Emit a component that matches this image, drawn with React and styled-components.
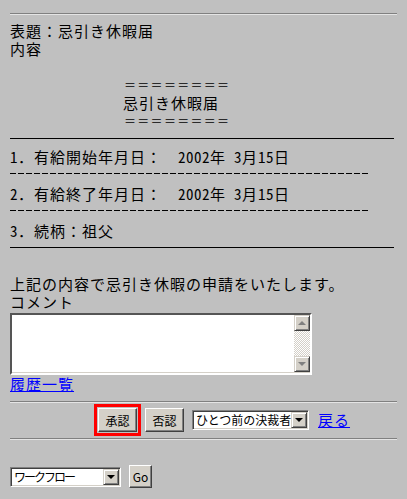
import React from 'react';
import styled, { createGlobalStyle } from 'styled-components';

const GlobalStyle = createGlobalStyle`
  body {
    margin: 0;
    background: #c0c0c0;
    font-family: "Noto Sans CJK JP", "Liberation Sans", sans-serif;
    font-size: 15px;
    letter-spacing: 1px;
    line-height: 18px;
    color: #000;
  }
`;

const Page = styled.div`
  padding: 13px 10px 0;
`;

const Groove = styled.div`
  height: 0;
  border-top: 1px solid #808080;
  border-bottom: 1px solid #e4e4e4;
  margin-top: ${(p) => p.$top || 0}px;
`;

const Solid = styled.div`
  width: 384px;
  height: 1px;
  background: #000;
  margin-top: ${(p) => p.$top || 0}px;
`;

const Dashes = styled.div`
  width: 358px;
  height: 1px;
  margin-top: ${(p) => p.$top || 0}px;
  background: repeating-linear-gradient(90deg, #000 0 6px, transparent 6px 8px);
`;

const Line = styled.div`
  height: 18px;
  white-space: pre;
  margin-top: ${(p) => p.$top || 0}px;
`;

const Indented = styled(Line)`
  padding-left: 113px;
`;

const Equals = styled.span`
  font-size: 12px;
  letter-spacing: 1.3px;
  padding-left: 1px;
  position: relative;
  top: -1px;
`;

const Half = styled.span`
  font-feature-settings: "hwid";
  letter-spacing: 0.5px;
`;

const Memo = styled.div`
  margin-top: 2px;
  width: 302px;
  height: 62px;
  box-sizing: border-box;
  display: flex;
  background: #fff;
  border-style: solid;
  border-width: 2px;
  border-color: #555 #fff #fff #555;
  box-shadow: inset -1px -1px 0 #d4d0c8;
`;

const MemoText = styled.div`
  flex: 1;
`;

const ScrollBar = styled.div`
  width: 16px;
  display: flex;
  flex-direction: column;
  margin-bottom: 1px;
`;

const ScrollTrack = styled.div`
  flex: 1;
  background: repeating-conic-gradient(#fff 0 25%, #d4d0c8 0 50%) 0 0 / 2px 2px;
`;

const ScrollButton = styled.div`
  height: 16px;
  box-sizing: border-box;
  background: #d4d0c8;
  border-style: solid;
  border-width: 1px;
  border-color: #d4d0c8 #404040 #404040 #d4d0c8;
  box-shadow: inset 1px 1px 0 #fff, inset -1px -1px 0 #808080;
  display: flex;
  align-items: center;
  justify-content: center;
`;

const Tri = styled.span`
  width: 0;
  height: 0;
  border-left: 4px solid transparent;
  border-right: 4px solid transparent;
  ${(p) =>
    p.$up
      ? `border-bottom: 4px solid ${p.$color};`
      : `border-top: 4px solid ${p.$color};`}
`;

const Link = styled.a`
  color: #0000ff;
  text-decoration: underline;
  cursor: pointer;
`;

const ActionRow = styled.div`
  margin-top: 5px;
  padding-left: 88px;
  display: flex;
  align-items: center;
  gap: 8px;
  height: 24px;
`;

const Button = styled.button`
  box-sizing: border-box;
  width: ${(p) => p.$w || 39}px;
  height: ${(p) => p.$h || 24}px;
  padding: 0;
  font-family: "Noto Sans CJK JP", "Liberation Sans", sans-serif;
  font-size: 12px;
  letter-spacing: 0;
  color: #000;
  background: #d4d0c8;
  border-style: solid;
  border-width: 1px;
  border-color: #fff #404040 #404040 #fff;
  box-shadow: inset -1px -1px 0 #808080;
  outline: ${(p) => (p.$focus ? '3px solid #ff0000' : 'none')};
  outline-offset: 1px;
`;

const Select = styled.div`
  box-sizing: border-box;
  width: ${(p) => p.$w}px;
  height: 20px;
  display: flex;
  background: #fff;
  border-style: solid;
  border-width: 1px;
  border-color: #808080 #fff #fff #808080;
  box-shadow: inset 1px 1px 0 #404040, inset -1px -1px 0 #d4d0c8;
  padding: 1px;
  font-size: 12px;
  line-height: 16px;
  letter-spacing: 0;
`;

const SelectText = styled.div`
  flex: 1;
  padding-left: 2px;
  white-space: nowrap;
  overflow: hidden;
  letter-spacing: ${(p) => p.$ls || 0}px;
`;

const SelectButton = styled(ScrollButton)`
  width: 16px;
  height: 16px;
`;

const WorkflowRow = styled.div`
  margin-top: 25px;
  display: flex;
  align-items: center;
  gap: 8px;
`;

const Spacer = styled.div`
  margin-left: ${(p) => p.$l}px;
`;

const App = () => (
  <>
    <GlobalStyle />
    <Page>
      <Groove />
      <Line $top={7}>表題：忌引き休暇届</Line>
      <Line>内容</Line>
      <Line />
      <Indented><Equals>＝＝＝＝＝＝＝＝</Equals></Indented>
      <Indented>忌引き休暇届</Indented>
      <Indented><Equals>＝＝＝＝＝＝＝＝</Equals></Indented>
      <Solid $top={8} />
      <Line $top={9}><Half>1</Half>．有給開始年月日：　<Half>2002</Half>年<Half> 3</Half>月<Half>15</Half>日</Line>
      <Dashes $top={7} />
      <Line $top={11}><Half>2</Half>．有給終了年月日：　<Half>2002</Half>年<Half> 3</Half>月<Half>15</Half>日</Line>
      <Dashes $top={7} />
      <Line $top={11}><Half>3</Half>．続柄：祖父</Line>
      <Solid $top={7} />
      <Line $top={27}>上記の内容で忌引き休暇の申請をいたします。</Line>
      <Line>コメント</Line>
      <Memo>
        <MemoText />
        <ScrollBar>
          <ScrollButton><Tri $up $color="#808080" /></ScrollButton>
          <ScrollTrack />
          <ScrollButton><Tri $color="#808080" /></ScrollButton>
        </ScrollBar>
      </Memo>
      <Line><Link>履歴一覧</Link></Line>
      <Groove $top={8} />
      <ActionRow>
        <Button $focus>承認</Button>
        <Button>否認</Button>
        <Select $w={117}>
          <SelectText>ひとつ前の決裁者</SelectText>
          <SelectButton><Tri $color="#000" /></SelectButton>
        </Select>
        <Spacer $l={1}><Link>戻る</Link></Spacer>
      </ActionRow>
      <Groove $top={6} />
      <WorkflowRow>
        <Select $w={111}>
          <SelectText $ls={-2}>ワークフロー</SelectText>
          <SelectButton><Tri $color="#000" /></SelectButton>
        </Select>
        <Button $w={23} $h={23}>Go</Button>
      </WorkflowRow>
    </Page>
  </>
);

export default App;
